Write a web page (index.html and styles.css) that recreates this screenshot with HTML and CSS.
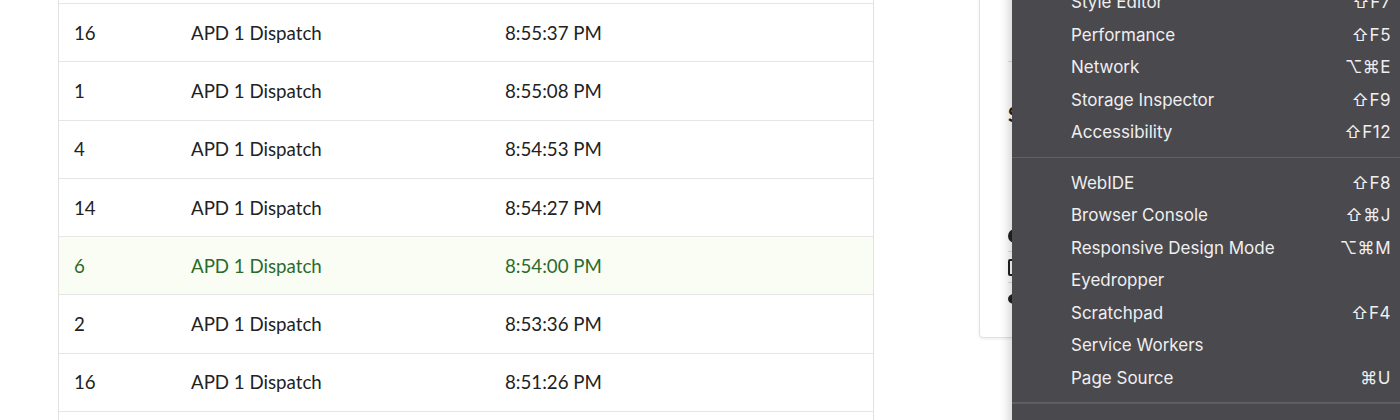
FILE: index.html
```html
<!DOCTYPE html>
<html>
<head>
<meta charset="utf-8">
<link rel="stylesheet" href="styles.css">
</head>
<body>
<div class="page">
  <div class="table">
    <div class="row"><div class="c1">9</div><div class="c2">APD 1 Dispatch</div><div class="c3">8:56:02 PM</div></div>
    <div class="row"><div class="c1">16</div><div class="c2">APD 1 Dispatch</div><div class="c3">8:55:37 PM</div></div>
    <div class="row"><div class="c1">1</div><div class="c2">APD 1 Dispatch</div><div class="c3">8:55:08 PM</div></div>
    <div class="row"><div class="c1">4</div><div class="c2">APD 1 Dispatch</div><div class="c3">8:54:53 PM</div></div>
    <div class="row"><div class="c1">14</div><div class="c2">APD 1 Dispatch</div><div class="c3">8:54:27 PM</div></div>
    <div class="row active"><div class="c1">6</div><div class="c2">APD 1 Dispatch</div><div class="c3">8:54:00 PM</div></div>
    <div class="row"><div class="c1">2</div><div class="c2">APD 1 Dispatch</div><div class="c3">8:53:36 PM</div></div>
    <div class="row"><div class="c1">16</div><div class="c2">APD 1 Dispatch</div><div class="c3">8:51:26 PM</div></div>
    <div class="row"><div class="c1">3</div><div class="c2">APD 1 Dispatch</div><div class="c3">8:50:11 PM</div></div>
  </div>
  <div class="card">
    <div class="card-head"></div>
    <div class="card-title">S</div>
    <div class="card-list">
      <div class="card-item"><span class="dot"></span></div>
      <div class="card-item"><span class="box"></span></div>
      <div class="card-item"><span class="dot small"></span></div>
    </div>
  </div>
</div>

<div class="menu">
  <div class="group">
    <div class="item"><span>Style Editor</span><span class="key">⇧F7</span></div>
    <div class="item"><span>Performance</span><span class="key">⇧F5</span></div>
    <div class="item"><span>Network</span><span class="key">⌥⌘E</span></div>
    <div class="item"><span>Storage Inspector</span><span class="key">⇧F9</span></div>
    <div class="item"><span>Accessibility</span><span class="key">⇧F12</span></div>
  </div>
  <div class="group">
    <div class="item"><span>WebIDE</span><span class="key">⇧F8</span></div>
    <div class="item"><span>Browser Console</span><span class="key">⇧⌘J</span></div>
    <div class="item"><span>Responsive Design Mode</span><span class="key">⌥⌘M</span></div>
    <div class="item"><span>Eyedropper</span><span class="key"></span></div>
    <div class="item"><span>Scratchpad</span><span class="key">⇧F4</span></div>
    <div class="item"><span>Service Workers</span><span class="key"></span></div>
    <div class="item"><span>Page Source</span><span class="key">⌘U</span></div>
  </div>
  <div class="group last"></div>
</div>
</body>
</html>
```

FILE: styles.css
```css
html, body {
  margin: 0;
  padding: 0;
  background: #ffffff;
  overflow: hidden;
  height: 420px;
}

.page {
  display: flex;
  align-items: flex-start;
  padding-left: 58px;
}

.table {
  width: 816px;
  box-sizing: border-box;
  border-left: 1px solid #e2e2e2;
  border-right: 1px solid #e2e2e2;
  margin-top: -54.3px;
  font-family: Lato, "Liberation Sans", sans-serif;
  font-size: 18.7px;
  color: #222222;
}

.row {
  display: grid;
  grid-template-columns: 117px 314px 1fr;
  align-items: center;
  height: 58.3px;
  box-sizing: border-box;
  border-bottom: 1.5px solid #e6e6e6;
  padding-left: 15px;
}

.row.active {
  background: #fafdf3;
  color: #2a6b2c;
}

.card {
  margin-left: 105px;
  margin-top: -20px;
  width: 300px;
  height: 358px;
  box-sizing: border-box;
  border: 1px solid #e2e2e2;
  border-radius: 4px;
  box-shadow: 0 1px 3px rgba(0, 0, 0, 0.08);
  background: #ffffff;
  padding: 0 0 0 28px;
  font-family: Lato, "Liberation Sans", sans-serif;
  color: #222222;
}

.card-head {
  height: 81px;
  box-sizing: border-box;
  border-bottom: 1px solid #e0e0e0;
}

.card-title {
  margin-top: 40px;
  font-size: 20px;
  font-weight: 700;
}

.card-list {
  margin-top: 95px;
}

.card-item {
  display: flex;
  align-items: center;
  height: 31px;
  box-sizing: border-box;
  border-bottom: 1px solid #e0e0e0;
}

.card-item:last-child {
  border-bottom: none;
}

.dot {
  width: 14px;
  height: 14px;
  border-radius: 50%;
  background: #222222;
}

.dot.small {
  width: 12px;
  height: 10px;
}

.box {
  width: 10px;
  height: 13px;
  border: 2px solid #222222;
  border-radius: 2px;
}

.menu {
  position: absolute;
  top: -14px;
  left: 1012px;
  width: 388px;
  background: #4a494e;
  box-shadow: -3px 0 10px rgba(0, 0, 0, 0.18);
  font-family: Inter, "Open Sans", sans-serif;
  font-size: 17px;
  color: #efeff0;
}

.group {
  padding: 0 9px 8px 59px;
  border-bottom: 1px solid #616065;
}

.group + .group {
  padding-top: 9px;
}

.group.last {
  border-bottom: none;
  height: 30px;
  border-top: 1px solid #5c5b60;
}

.item {
  display: flex;
  justify-content: space-between;
  align-items: center;
  height: 32.5px;
}

.key {
  font-family: Inter, "DejaVu Sans", sans-serif;
  letter-spacing: 0.5px;
}
```
